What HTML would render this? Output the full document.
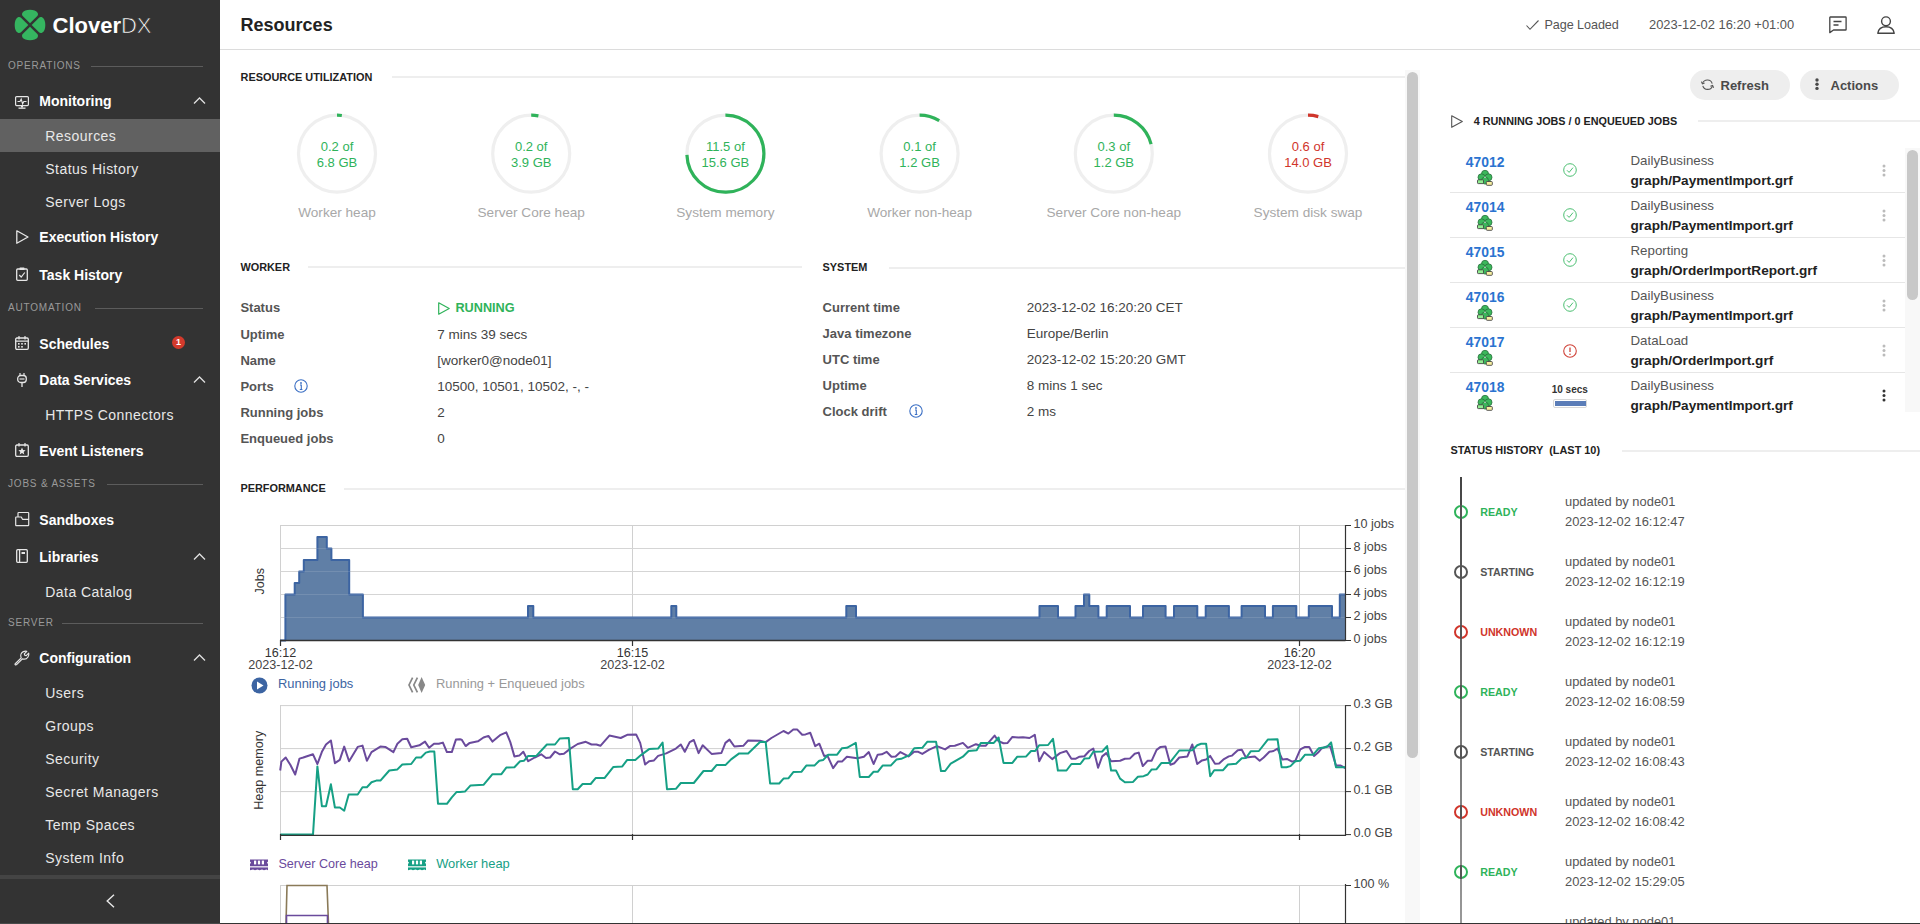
<!DOCTYPE html><html><head><meta charset="utf-8"><style>
html,body{margin:0;padding:0;width:1920px;height:924px;overflow:hidden;background:#fff;font-family:"Liberation Sans",sans-serif;}
body{position:relative}
div{box-sizing:border-box}
</style></head><body>
<div style="position:absolute;left:0px;top:0px;width:220px;height:924px;background:#333333;"></div>
<svg style="position:absolute;left:15px;top:10px;overflow:visible" width="30" height="30" viewBox="0 0 30 30"><path d="M15,13.3 L7.7,6 C5.8,4 7.5,-0.3 15,-0.3 C22.5,-0.3 24.2,4 22.3,6 Z" fill="#35b560" transform="rotate(0 15 15)"/><path d="M15,13.3 L7.7,6 C5.8,4 7.5,-0.3 15,-0.3 C22.5,-0.3 24.2,4 22.3,6 Z" fill="#35b560" transform="rotate(90 15 15)"/><path d="M15,13.3 L7.7,6 C5.8,4 7.5,-0.3 15,-0.3 C22.5,-0.3 24.2,4 22.3,6 Z" fill="#35b560" transform="rotate(180 15 15)"/><path d="M15,13.3 L7.7,6 C5.8,4 7.5,-0.3 15,-0.3 C22.5,-0.3 24.2,4 22.3,6 Z" fill="#35b560" transform="rotate(270 15 15)"/></svg>
<div style="position:absolute;left:52.50px;top:14.68px;font-size:22px;line-height:22px;color:#fff;font-weight:700;letter-spacing:0px;white-space:nowrap;"><b>Clover</b><span style="font-weight:400;-webkit-text-stroke:0.7px #333">DX</span></div>
<div style="position:absolute;left:8.00px;top:60.53px;font-size:10px;line-height:10px;color:#9a9a9a;font-weight:400;letter-spacing:0.8px;white-space:nowrap;">OPERATIONS</div>
<div style="position:absolute;left:91px;top:66px;width:112px;height:1px;background:#5c5c5c;"></div>
<div style="position:absolute;left:39.30px;top:94.15px;font-size:14px;line-height:14px;color:#ffffff;font-weight:700;letter-spacing:0px;white-space:nowrap;">Monitoring</div>
<svg style="position:absolute;left:193px;top:97px;overflow:visible" width="13" height="7" viewBox="0 0 13 7"><path d="M1,6.5 L6.5,1 L12,6.5" fill="none" stroke="#e0e0e0" stroke-width="1.3"/></svg>
<svg style="position:absolute;left:15px;top:95.5px;overflow:visible" width="14" height="13" viewBox="0 0 14 13"><rect x="0.6" y="0.6" width="12.8" height="9" rx="1" fill="none" stroke="#e6e6e6" stroke-width="1.2"/><path d="M2.5,5.5 L5,5.5 L6.2,3 L7.6,8 L8.8,5.5 L11.5,5.5" fill="none" stroke="#e6e6e6" stroke-width="1.1"/><rect x="6" y="10" width="2" height="1.5" fill="#e6e6e6"/><rect x="3.5" y="11.5" width="7" height="1.3" fill="#e6e6e6"/></svg>
<div style="position:absolute;left:0px;top:119px;width:220px;height:33px;background:#616161;"></div>
<div style="position:absolute;left:45.30px;top:128.85px;font-size:14px;line-height:14px;color:#e8e8e8;font-weight:400;letter-spacing:0.45px;white-space:nowrap;">Resources</div>
<div style="position:absolute;left:45.30px;top:162.15px;font-size:14px;line-height:14px;color:#e8e8e8;font-weight:400;letter-spacing:0.45px;white-space:nowrap;">Status History</div>
<div style="position:absolute;left:45.30px;top:195.45px;font-size:14px;line-height:14px;color:#e8e8e8;font-weight:400;letter-spacing:0.45px;white-space:nowrap;">Server Logs</div>
<div style="position:absolute;left:39.30px;top:230.15px;font-size:14px;line-height:14px;color:#ffffff;font-weight:700;letter-spacing:0px;white-space:nowrap;">Execution History</div>
<svg style="position:absolute;left:16px;top:230px;overflow:visible" width="13" height="14" viewBox="0 0 13 14"><path d="M0.8,0.8 L12,7 L0.8,13.2 Z" fill="none" stroke="#e6e6e6" stroke-width="1.3" stroke-linejoin="round"/></svg>
<div style="position:absolute;left:39.30px;top:267.65px;font-size:14px;line-height:14px;color:#ffffff;font-weight:700;letter-spacing:0px;white-space:nowrap;">Task History</div>
<svg style="position:absolute;left:16px;top:267.0px;overflow:visible" width="12" height="14" viewBox="0 0 12 14"><rect x="0.7" y="2" width="10.6" height="11.3" rx="1" fill="none" stroke="#e6e6e6" stroke-width="1.3"/><rect x="3.5" y="0.5" width="5" height="2.5" rx="0.6" fill="#e6e6e6"/><path d="M3.2,8 L5.2,10 L8.8,5.5" fill="none" stroke="#e6e6e6" stroke-width="1.2"/></svg>
<div style="position:absolute;left:8.00px;top:302.54px;font-size:10px;line-height:10px;color:#9a9a9a;font-weight:400;letter-spacing:0.8px;white-space:nowrap;">AUTOMATION</div>
<div style="position:absolute;left:95px;top:308px;width:108px;height:1px;background:#5c5c5c;"></div>
<div style="position:absolute;left:39.30px;top:336.65px;font-size:14px;line-height:14px;color:#ffffff;font-weight:700;letter-spacing:0px;white-space:nowrap;">Schedules</div>
<div style="position:absolute;left:172px;top:336.0px;width:13px;height:13px;border-radius:50%;background:#d33a2c;color:#fff;font-size:9px;line-height:13px;text-align:center;font-weight:700">1</div>
<svg style="position:absolute;left:15px;top:336.0px;overflow:visible" width="14" height="14" viewBox="0 0 14 14"><rect x="0.7" y="2" width="12.6" height="11.3" rx="1.2" fill="none" stroke="#e6e6e6" stroke-width="1.3"/><path d="M4,0 V3.5 M10,0 V3.5 M0.7,5.2 H13.3" stroke="#e6e6e6" stroke-width="1.2"/><g fill="#e6e6e6"><rect x="3" y="7" width="1.6" height="1.6"/><rect x="6.2" y="7" width="1.6" height="1.6"/><rect x="9.4" y="7" width="1.6" height="1.6"/><rect x="3" y="10" width="1.6" height="1.6"/><rect x="6.2" y="10" width="1.6" height="1.6"/></g></svg>
<div style="position:absolute;left:39.30px;top:373.35px;font-size:14px;line-height:14px;color:#ffffff;font-weight:700;letter-spacing:0px;white-space:nowrap;">Data Services</div>
<svg style="position:absolute;left:193px;top:376.2px;overflow:visible" width="13" height="7" viewBox="0 0 13 7"><path d="M1,6.5 L6.5,1 L12,6.5" fill="none" stroke="#e0e0e0" stroke-width="1.3"/></svg>
<svg style="position:absolute;left:17px;top:372.7px;overflow:visible" width="10" height="14" viewBox="0 0 10 14"><path d="M3,0 V2.5 M7,0 V2.5" stroke="#e6e6e6" stroke-width="1.2"/><rect x="0.7" y="2.5" width="8.6" height="7" rx="3" fill="none" stroke="#e6e6e6" stroke-width="1.3"/><path d="M2.5,6 H7.5" stroke="#e6e6e6" stroke-width="1.2"/><path d="M5,9.5 V14" stroke="#e6e6e6" stroke-width="1.3"/></svg>
<div style="position:absolute;left:45.30px;top:408.35px;font-size:14px;line-height:14px;color:#e8e8e8;font-weight:400;letter-spacing:0.45px;white-space:nowrap;">HTTPS Connectors</div>
<div style="position:absolute;left:39.30px;top:443.95px;font-size:14px;line-height:14px;color:#ffffff;font-weight:700;letter-spacing:0px;white-space:nowrap;">Event Listeners</div>
<svg style="position:absolute;left:15px;top:442.8px;overflow:visible" width="14" height="14" viewBox="0 0 14 14"><rect x="0.7" y="2" width="12.6" height="11.3" rx="1.2" fill="none" stroke="#e6e6e6" stroke-width="1.3"/><path d="M4,0 V3.5 M10,0 V3.5" stroke="#e6e6e6" stroke-width="1.2"/><path d="M7,4.5 L8.1,7 L10.6,7.2 L8.7,8.9 L9.3,11.4 L7,10.1 L4.7,11.4 L5.3,8.9 L3.4,7.2 L5.9,7 Z" fill="#e6e6e6"/></svg>
<div style="position:absolute;left:8.00px;top:478.54px;font-size:10px;line-height:10px;color:#9a9a9a;font-weight:400;letter-spacing:0.8px;white-space:nowrap;">JOBS &amp; ASSETS</div>
<div style="position:absolute;left:107px;top:484px;width:96px;height:1px;background:#5c5c5c;"></div>
<div style="position:absolute;left:39.30px;top:512.55px;font-size:14px;line-height:14px;color:#ffffff;font-weight:700;letter-spacing:0px;white-space:nowrap;">Sandboxes</div>
<svg style="position:absolute;left:15px;top:511.59999999999997px;overflow:visible" width="14" height="14" viewBox="0 0 14 14"><path d="M3,5 V1.2 Q3,0.5 3.7,0.5 H13 Q13.7,0.5 13.7,1.2 V7.3" fill="none" stroke="#e6e6e6" stroke-width="1.2"/><path d="M0.7,13 V5.6 Q0.7,5 1.3,5 H6.3 L7.5,7.3 H13.7 V13 Q13.7,13.7 13,13.7 H1.4 Q0.7,13.7 0.7,13 Z" fill="none" stroke="#e6e6e6" stroke-width="1.2" stroke-linejoin="round"/></svg>
<div style="position:absolute;left:39.30px;top:549.65px;font-size:14px;line-height:14px;color:#ffffff;font-weight:700;letter-spacing:0px;white-space:nowrap;">Libraries</div>
<svg style="position:absolute;left:193px;top:552.5px;overflow:visible" width="13" height="7" viewBox="0 0 13 7"><path d="M1,6.5 L6.5,1 L12,6.5" fill="none" stroke="#e0e0e0" stroke-width="1.3"/></svg>
<svg style="position:absolute;left:16px;top:549.0px;overflow:visible" width="12" height="14" viewBox="0 0 12 14"><rect x="0.7" y="0.7" width="10.6" height="12.6" rx="1" fill="none" stroke="#e6e6e6" stroke-width="1.3"/><path d="M3.6,0.7 V13.3" stroke="#e6e6e6" stroke-width="1.3"/><rect x="5.5" y="3" width="3.5" height="2" fill="#e6e6e6"/></svg>
<div style="position:absolute;left:45.30px;top:584.95px;font-size:14px;line-height:14px;color:#e8e8e8;font-weight:400;letter-spacing:0.45px;white-space:nowrap;">Data Catalog</div>
<div style="position:absolute;left:8.00px;top:617.83px;font-size:10px;line-height:10px;color:#9a9a9a;font-weight:400;letter-spacing:0.8px;white-space:nowrap;">SERVER</div>
<div style="position:absolute;left:62px;top:623px;width:141px;height:1px;background:#5c5c5c;"></div>
<div style="position:absolute;left:39.30px;top:651.35px;font-size:14px;line-height:14px;color:#ffffff;font-weight:700;letter-spacing:0px;white-space:nowrap;">Configuration</div>
<svg style="position:absolute;left:193px;top:654.2px;overflow:visible" width="13" height="7" viewBox="0 0 13 7"><path d="M1,6.5 L6.5,1 L12,6.5" fill="none" stroke="#e0e0e0" stroke-width="1.3"/></svg>
<svg style="position:absolute;left:14px;top:650.2px;overflow:visible" width="15" height="15" viewBox="0 0 15 15"><path d="M1.5,13.5 L7.2,7.8 C6.2,5.5 7,2.8 9.3,1.6 C10.5,1 11.8,1 12.8,1.3 L10.3,3.8 L10.8,5.2 L12.2,5.7 L14.7,3.2 C15,4.4 14.8,5.8 14,7 C12.8,8.8 10.5,9.6 8.4,8.9 L2.6,14.6 C2.2,15 1.5,15 1.2,14.6 C0.8,14.2 0.9,13.9 1.5,13.5 Z" fill="none" stroke="#e6e6e6" stroke-width="1.2" stroke-linejoin="round"/></svg>
<div style="position:absolute;left:45.30px;top:686.35px;font-size:14px;line-height:14px;color:#e8e8e8;font-weight:400;letter-spacing:0.45px;white-space:nowrap;">Users</div>
<div style="position:absolute;left:45.30px;top:719.05px;font-size:14px;line-height:14px;color:#e8e8e8;font-weight:400;letter-spacing:0.45px;white-space:nowrap;">Groups</div>
<div style="position:absolute;left:45.30px;top:752.35px;font-size:14px;line-height:14px;color:#e8e8e8;font-weight:400;letter-spacing:0.45px;white-space:nowrap;">Security</div>
<div style="position:absolute;left:45.30px;top:785.35px;font-size:14px;line-height:14px;color:#e8e8e8;font-weight:400;letter-spacing:0.45px;white-space:nowrap;">Secret Managers</div>
<div style="position:absolute;left:45.30px;top:817.95px;font-size:14px;line-height:14px;color:#e8e8e8;font-weight:400;letter-spacing:0.45px;white-space:nowrap;">Temp Spaces</div>
<div style="position:absolute;left:45.30px;top:851.35px;font-size:14px;line-height:14px;color:#e8e8e8;font-weight:400;letter-spacing:0.45px;white-space:nowrap;">System Info</div>
<div style="position:absolute;left:0px;top:875px;width:220px;height:4px;background:#444444;"></div>
<svg style="position:absolute;left:106px;top:894px;overflow:visible" width="9" height="14" viewBox="0 0 9 14"><path d="M8,0.7 L1.2,7 L8,13.3" fill="none" stroke="#e8e8e8" stroke-width="1.4"/></svg>
<div style="position:absolute;left:240.60px;top:16.16px;font-size:18px;line-height:18px;color:#222;font-weight:700;letter-spacing:0px;white-space:nowrap;">Resources</div>
<div style="position:absolute;left:220px;top:49px;width:1700px;height:1px;background:#dcdcdc;"></div>
<svg style="position:absolute;left:1526px;top:20px;overflow:visible" width="13" height="10" viewBox="0 0 13 10"><path d="M0.5,5.5 L4,9.3 L12.5,0.5" fill="none" stroke="#555" stroke-width="1.1"/></svg>
<div style="position:absolute;left:1544.40px;top:18.53px;font-size:12.6px;line-height:12.6px;color:#555;font-weight:400;letter-spacing:-0.05px;white-space:nowrap;">Page Loaded</div>
<div style="position:absolute;left:1649.00px;top:19.28px;font-size:12.9px;line-height:12.9px;color:#555;font-weight:400;letter-spacing:0px;white-space:nowrap;">2023-12-02 16:20 +01:00</div>
<svg style="position:absolute;left:1829px;top:16px;overflow:visible" width="18" height="17" viewBox="0 0 18 17"><path d="M1.3,1 H16.5 C16.9,1 17.1,1.2 17.1,1.6 V13.4 C17.1,13.8 16.9,14 16.5,14 H4.5 L0.8,16.6 V1.6 C0.8,1.2 1,1 1.3,1 Z" fill="none" stroke="#444" stroke-width="1.3" stroke-linejoin="round"/><path d="M4.5,5.5 H12.5 M4.5,9 H9.5" stroke="#444" stroke-width="1.3"/></svg>
<svg style="position:absolute;left:1877px;top:16px;overflow:visible" width="18" height="18" viewBox="0 0 18 18"><circle cx="9" cy="5.3" r="4.4" fill="none" stroke="#444" stroke-width="1.4"/><path d="M0.8,17.3 C1.5,12.5 4.8,10.8 9,10.8 C13.2,10.8 16.5,12.5 17.2,17.3 Z" fill="none" stroke="#444" stroke-width="1.4" stroke-linejoin="round"/></svg>
<div style="position:absolute;left:240.60px;top:71.77px;font-size:10.9px;line-height:10.9px;color:#222;font-weight:700;letter-spacing:0px;white-space:nowrap;">RESOURCE UTILIZATION</div>
<div style="position:absolute;left:392px;top:76px;width:1013px;height:2px;background:#eeeeee;"></div>
<div style="position:absolute;left:1405px;top:70px;width:15px;height:854px;background:#f8f8f8;"></div>
<div style="position:absolute;left:1407px;top:72px;width:11px;height:686px;background:#c8c8c8;border-radius:6px;"></div>
<svg style="position:absolute;left:0;top:0;overflow:visible" width="1" height="1"><circle cx="337" cy="153.7" r="38.5" fill="none" stroke="#efefef" stroke-width="3.2"/><path d="M337,115.19999999999999 A38.5,38.5 0 0 1 341.83,115.50" fill="none" stroke="#2fb35a" stroke-width="3.2"/></svg>
<div style="position:absolute;left:337.00px;top:139.80px;font-size:13px;line-height:13px;color:#2fb35a;font-weight:400;letter-spacing:0px;white-space:nowrap;transform:translateX(-50%);">0.2 of</div>
<div style="position:absolute;left:337.00px;top:155.80px;font-size:13px;line-height:13px;color:#2fb35a;font-weight:400;letter-spacing:0px;white-space:nowrap;transform:translateX(-50%);">6.8 GB</div>
<div style="position:absolute;left:337.00px;top:206.49px;font-size:13.6px;line-height:13.6px;color:#a8a8a8;font-weight:400;letter-spacing:0px;white-space:nowrap;transform:translateX(-50%);">Worker heap</div>
<svg style="position:absolute;left:0;top:0;overflow:visible" width="1" height="1"><circle cx="531.2" cy="153.7" r="38.5" fill="none" stroke="#efefef" stroke-width="3.2"/><path d="M531.2,115.19999999999999 A38.5,38.5 0 0 1 538.41,115.88" fill="none" stroke="#2fb35a" stroke-width="3.2"/></svg>
<div style="position:absolute;left:531.20px;top:139.80px;font-size:13px;line-height:13px;color:#2fb35a;font-weight:400;letter-spacing:0px;white-space:nowrap;transform:translateX(-50%);">0.2 of</div>
<div style="position:absolute;left:531.20px;top:155.80px;font-size:13px;line-height:13px;color:#2fb35a;font-weight:400;letter-spacing:0px;white-space:nowrap;transform:translateX(-50%);">3.9 GB</div>
<div style="position:absolute;left:531.20px;top:206.49px;font-size:13.6px;line-height:13.6px;color:#a8a8a8;font-weight:400;letter-spacing:0px;white-space:nowrap;transform:translateX(-50%);">Server Core heap</div>
<svg style="position:absolute;left:0;top:0;overflow:visible" width="1" height="1"><circle cx="725.4" cy="153.7" r="38.5" fill="none" stroke="#efefef" stroke-width="3.2"/><path d="M725.4,115.19999999999999 A38.5,38.5 0 1 1 686.92,154.91" fill="none" stroke="#2fb35a" stroke-width="3.2"/></svg>
<div style="position:absolute;left:725.40px;top:139.80px;font-size:13px;line-height:13px;color:#2fb35a;font-weight:400;letter-spacing:0px;white-space:nowrap;transform:translateX(-50%);">11.5 of</div>
<div style="position:absolute;left:725.40px;top:155.80px;font-size:13px;line-height:13px;color:#2fb35a;font-weight:400;letter-spacing:0px;white-space:nowrap;transform:translateX(-50%);">15.6 GB</div>
<div style="position:absolute;left:725.40px;top:206.49px;font-size:13.6px;line-height:13.6px;color:#a8a8a8;font-weight:400;letter-spacing:0px;white-space:nowrap;transform:translateX(-50%);">System memory</div>
<svg style="position:absolute;left:0;top:0;overflow:visible" width="1" height="1"><circle cx="919.6" cy="153.7" r="38.5" fill="none" stroke="#efefef" stroke-width="3.2"/><path d="M919.6,115.19999999999999 A38.5,38.5 0 0 1 939.20,120.56" fill="none" stroke="#2fb35a" stroke-width="3.2"/></svg>
<div style="position:absolute;left:919.60px;top:139.80px;font-size:13px;line-height:13px;color:#2fb35a;font-weight:400;letter-spacing:0px;white-space:nowrap;transform:translateX(-50%);">0.1 of</div>
<div style="position:absolute;left:919.60px;top:155.80px;font-size:13px;line-height:13px;color:#2fb35a;font-weight:400;letter-spacing:0px;white-space:nowrap;transform:translateX(-50%);">1.2 GB</div>
<div style="position:absolute;left:919.60px;top:206.49px;font-size:13.6px;line-height:13.6px;color:#a8a8a8;font-weight:400;letter-spacing:0px;white-space:nowrap;transform:translateX(-50%);">Worker non-heap</div>
<svg style="position:absolute;left:0;top:0;overflow:visible" width="1" height="1"><circle cx="1113.8" cy="153.7" r="38.5" fill="none" stroke="#efefef" stroke-width="3.2"/><path d="M1113.8,115.19999999999999 A38.5,38.5 0 0 1 1151.09,144.13" fill="none" stroke="#2fb35a" stroke-width="3.2"/></svg>
<div style="position:absolute;left:1113.80px;top:139.80px;font-size:13px;line-height:13px;color:#2fb35a;font-weight:400;letter-spacing:0px;white-space:nowrap;transform:translateX(-50%);">0.3 of</div>
<div style="position:absolute;left:1113.80px;top:155.80px;font-size:13px;line-height:13px;color:#2fb35a;font-weight:400;letter-spacing:0px;white-space:nowrap;transform:translateX(-50%);">1.2 GB</div>
<div style="position:absolute;left:1113.80px;top:206.49px;font-size:13.6px;line-height:13.6px;color:#a8a8a8;font-weight:400;letter-spacing:0px;white-space:nowrap;transform:translateX(-50%);">Server Core non-heap</div>
<svg style="position:absolute;left:0;top:0;overflow:visible" width="1" height="1"><circle cx="1308" cy="153.7" r="38.5" fill="none" stroke="#efefef" stroke-width="3.2"/><path d="M1308,115.19999999999999 A38.5,38.5 0 0 1 1318.28,116.60" fill="none" stroke="#d0352b" stroke-width="3.2"/></svg>
<div style="position:absolute;left:1308.00px;top:139.80px;font-size:13px;line-height:13px;color:#d0352b;font-weight:400;letter-spacing:0px;white-space:nowrap;transform:translateX(-50%);">0.6 of</div>
<div style="position:absolute;left:1308.00px;top:155.80px;font-size:13px;line-height:13px;color:#d0352b;font-weight:400;letter-spacing:0px;white-space:nowrap;transform:translateX(-50%);">14.0 GB</div>
<div style="position:absolute;left:1308.00px;top:206.49px;font-size:13.6px;line-height:13.6px;color:#a8a8a8;font-weight:400;letter-spacing:0px;white-space:nowrap;transform:translateX(-50%);">System disk swap</div>
<div style="position:absolute;left:240.40px;top:261.57px;font-size:10.9px;line-height:10.9px;color:#222;font-weight:700;letter-spacing:0px;white-space:nowrap;">WORKER</div>
<div style="position:absolute;left:308px;top:266px;width:494px;height:2px;background:#eeeeee;"></div>
<div style="position:absolute;left:822.60px;top:262.07px;font-size:10.9px;line-height:10.9px;color:#222;font-weight:700;letter-spacing:0px;white-space:nowrap;">SYSTEM</div>
<div style="position:absolute;left:889px;top:267px;width:516px;height:2px;background:#eeeeee;"></div>
<div style="position:absolute;left:240.40px;top:301.00px;font-size:13px;line-height:13px;color:#555;font-weight:700;letter-spacing:0px;white-space:nowrap;">Status</div>
<div style="position:absolute;left:240.40px;top:328.00px;font-size:13px;line-height:13px;color:#555;font-weight:700;letter-spacing:0px;white-space:nowrap;">Uptime</div>
<div style="position:absolute;left:240.40px;top:354.00px;font-size:13px;line-height:13px;color:#555;font-weight:700;letter-spacing:0px;white-space:nowrap;">Name</div>
<div style="position:absolute;left:240.40px;top:380.00px;font-size:13px;line-height:13px;color:#555;font-weight:700;letter-spacing:0px;white-space:nowrap;">Ports</div>
<div style="position:absolute;left:240.40px;top:406.00px;font-size:13px;line-height:13px;color:#555;font-weight:700;letter-spacing:0px;white-space:nowrap;">Running jobs</div>
<div style="position:absolute;left:240.40px;top:432.00px;font-size:13px;line-height:13px;color:#555;font-weight:700;letter-spacing:0px;white-space:nowrap;">Enqueued jobs</div>
<svg style="position:absolute;left:437.5px;top:301.5px;overflow:visible" width="12" height="13" viewBox="0 0 12 13"><path d="M0.7,0.8 L11.2,6.5 L0.7,12.2 Z" fill="none" stroke="#2fb35a" stroke-width="1.2" stroke-linejoin="round"/></svg>
<div style="position:absolute;left:455.40px;top:301.75px;font-size:12.7px;line-height:12.7px;color:#2fb35a;font-weight:700;letter-spacing:0px;white-space:nowrap;">RUNNING</div>
<div style="position:absolute;left:437.30px;top:327.57px;font-size:13.5px;line-height:13.5px;color:#444;font-weight:400;letter-spacing:0px;white-space:nowrap;">7 mins 39 secs</div>
<div style="position:absolute;left:437.30px;top:353.57px;font-size:13.5px;line-height:13.5px;color:#444;font-weight:400;letter-spacing:0px;white-space:nowrap;">[worker0@node01]</div>
<div style="position:absolute;left:437.30px;top:379.57px;font-size:13.5px;line-height:13.5px;color:#444;font-weight:400;letter-spacing:0px;white-space:nowrap;">10500, 10501, 10502, -, -</div>
<div style="position:absolute;left:437.30px;top:405.57px;font-size:13.5px;line-height:13.5px;color:#444;font-weight:400;letter-spacing:0px;white-space:nowrap;">2</div>
<div style="position:absolute;left:437.30px;top:431.57px;font-size:13.5px;line-height:13.5px;color:#444;font-weight:400;letter-spacing:0px;white-space:nowrap;">0</div>
<svg style="position:absolute;left:294px;top:379px;overflow:visible" width="14" height="14" viewBox="0 0 14 14"><circle cx="7" cy="7" r="6.2" fill="none" stroke="#3b6fc4" stroke-width="1.1"/><circle cx="7" cy="4" r="0.9" fill="#3b6fc4"/><path d="M6,6 H7.3 V10.5 M5.8,10.5 H8.4" fill="none" stroke="#3b6fc4" stroke-width="1.1"/></svg>
<div style="position:absolute;left:822.60px;top:300.70px;font-size:13px;line-height:13px;color:#555;font-weight:700;letter-spacing:0px;white-space:nowrap;">Current time</div>
<div style="position:absolute;left:1026.70px;top:301.07px;font-size:13.5px;line-height:13.5px;color:#444;font-weight:400;letter-spacing:0px;white-space:nowrap;">2023-12-02 16:20:20 CET</div>
<div style="position:absolute;left:822.60px;top:326.80px;font-size:13px;line-height:13px;color:#555;font-weight:700;letter-spacing:0px;white-space:nowrap;">Java timezone</div>
<div style="position:absolute;left:1026.70px;top:327.17px;font-size:13.5px;line-height:13.5px;color:#444;font-weight:400;letter-spacing:0px;white-space:nowrap;">Europe/Berlin</div>
<div style="position:absolute;left:822.60px;top:352.80px;font-size:13px;line-height:13px;color:#555;font-weight:700;letter-spacing:0px;white-space:nowrap;">UTC time</div>
<div style="position:absolute;left:1026.70px;top:353.17px;font-size:13.5px;line-height:13.5px;color:#444;font-weight:400;letter-spacing:0px;white-space:nowrap;">2023-12-02 15:20:20 GMT</div>
<div style="position:absolute;left:822.60px;top:378.80px;font-size:13px;line-height:13px;color:#555;font-weight:700;letter-spacing:0px;white-space:nowrap;">Uptime</div>
<div style="position:absolute;left:1026.70px;top:379.17px;font-size:13.5px;line-height:13.5px;color:#444;font-weight:400;letter-spacing:0px;white-space:nowrap;">8 mins 1 sec</div>
<div style="position:absolute;left:822.60px;top:404.80px;font-size:13px;line-height:13px;color:#555;font-weight:700;letter-spacing:0px;white-space:nowrap;">Clock drift</div>
<div style="position:absolute;left:1026.70px;top:405.17px;font-size:13.5px;line-height:13.5px;color:#444;font-weight:400;letter-spacing:0px;white-space:nowrap;">2 ms</div>
<svg style="position:absolute;left:909px;top:404px;overflow:visible" width="14" height="14" viewBox="0 0 14 14"><circle cx="7" cy="7" r="6.2" fill="none" stroke="#3b6fc4" stroke-width="1.1"/><circle cx="7" cy="4" r="0.9" fill="#3b6fc4"/><path d="M6,6 H7.3 V10.5 M5.8,10.5 H8.4" fill="none" stroke="#3b6fc4" stroke-width="1.1"/></svg>
<div style="position:absolute;left:240.40px;top:482.77px;font-size:10.9px;line-height:10.9px;color:#222;font-weight:700;letter-spacing:0px;white-space:nowrap;">PERFORMANCE</div>
<div style="position:absolute;left:344px;top:488px;width:1061px;height:2px;background:#eeeeee;"></div>
<svg style="position:absolute;left:0;top:0;overflow:visible" width="1" height="1"><path d="M280.5,525.5 H1345.5" stroke="#d0d0d0" stroke-width="1"/><path d="M280.5,548.5 H1345.5" stroke="#d0d0d0" stroke-width="1"/><path d="M280.5,571.5 H1345.5" stroke="#d0d0d0" stroke-width="1"/><path d="M280.5,594.5 H1345.5" stroke="#d0d0d0" stroke-width="1"/><path d="M280.5,617.5 H1345.5" stroke="#d0d0d0" stroke-width="1"/><path d="M280.5,525 V640" stroke="#d0d0d0" stroke-width="1"/><path d="M632.5,525 V640" stroke="#d0d0d0" stroke-width="1"/><path d="M1299.5,525 V640" stroke="#d0d0d0" stroke-width="1"/><path d="M280,640.5 H285.4 V594.5 H294.7 V583.0 H299.2 V571.5 H303.8 V560.0 H317.4 V537.0 H326.8 V548.5 H331.4 V560.0 H349.2 V594.5 H362.9 V617.5 H528 V606.0 H533.3 V617.5 H671.3 V606.0 H676.3 V617.5 H846.3 V606.0 H856 V617.5 H1039.5 V606.0 H1058 V617.5 H1075.5 V606.0 H1084 V594.5 H1089.3 V606.0 H1098.4 V617.5 H1106.7 V606.0 H1130 V617.5 H1143 V606.0 H1165.6 V617.5 H1174 V606.0 H1197.3 V617.5 H1205.7 V606.0 H1228.9 V617.5 H1241.6 V606.0 H1265 V617.5 H1272.9 V606.0 H1296.3 V617.5 H1308.8 V606.0 H1332 V617.5 H1339.8 V594.5 H1345 V640.5 H280 Z" fill="#607fa6"/><path d="M280,640.5 H285.4 V594.5 H294.7 V583.0 H299.2 V571.5 H303.8 V560.0 H317.4 V537.0 H326.8 V548.5 H331.4 V560.0 H349.2 V594.5 H362.9 V617.5 H528 V606.0 H533.3 V617.5 H671.3 V606.0 H676.3 V617.5 H846.3 V606.0 H856 V617.5 H1039.5 V606.0 H1058 V617.5 H1075.5 V606.0 H1084 V594.5 H1089.3 V606.0 H1098.4 V617.5 H1106.7 V606.0 H1130 V617.5 H1143 V606.0 H1165.6 V617.5 H1174 V606.0 H1197.3 V617.5 H1205.7 V606.0 H1228.9 V617.5 H1241.6 V606.0 H1265 V617.5 H1272.9 V606.0 H1296.3 V617.5 H1308.8 V606.0 H1332 V617.5 H1339.8 V594.5 H1345" fill="none" stroke="#3c64a2" stroke-width="2" stroke-linejoin="round"/><path d="M280.5,548.5 H1345.5" stroke="#ffffff" stroke-opacity="0.12" stroke-width="1"/><path d="M280.5,571.5 H1345.5" stroke="#ffffff" stroke-opacity="0.12" stroke-width="1"/><path d="M280.5,594.5 H1345.5" stroke="#ffffff" stroke-opacity="0.12" stroke-width="1"/><path d="M280.5,617.5 H1345.5" stroke="#ffffff" stroke-opacity="0.12" stroke-width="1"/><path d="M280,640.5 H1345.5" stroke="#333" stroke-width="1.3"/><path d="M1345.5,525 V641" stroke="#333" stroke-width="1.2"/><path d="M1345,525.5 H1351" stroke="#333" stroke-width="1"/><path d="M1345,548.5 H1351" stroke="#333" stroke-width="1"/><path d="M1345,571.5 H1351" stroke="#333" stroke-width="1"/><path d="M1345,594.5 H1351" stroke="#333" stroke-width="1"/><path d="M1345,617.5 H1351" stroke="#333" stroke-width="1"/><path d="M1345,640.5 H1351" stroke="#333" stroke-width="1"/><path d="M280.5,640 V646" stroke="#333" stroke-width="1.2"/><path d="M632.5,640 V646" stroke="#333" stroke-width="1.2"/><path d="M1299.5,640 V646" stroke="#333" stroke-width="1.2"/></svg>
<div style="position:absolute;left:1353.50px;top:518.43px;font-size:12.6px;line-height:12.6px;color:#444;font-weight:400;letter-spacing:0px;white-space:nowrap;">10 jobs</div>
<div style="position:absolute;left:1353.50px;top:541.43px;font-size:12.6px;line-height:12.6px;color:#444;font-weight:400;letter-spacing:0px;white-space:nowrap;">8 jobs</div>
<div style="position:absolute;left:1353.50px;top:564.43px;font-size:12.6px;line-height:12.6px;color:#444;font-weight:400;letter-spacing:0px;white-space:nowrap;">6 jobs</div>
<div style="position:absolute;left:1353.50px;top:587.43px;font-size:12.6px;line-height:12.6px;color:#444;font-weight:400;letter-spacing:0px;white-space:nowrap;">4 jobs</div>
<div style="position:absolute;left:1353.50px;top:610.43px;font-size:12.6px;line-height:12.6px;color:#444;font-weight:400;letter-spacing:0px;white-space:nowrap;">2 jobs</div>
<div style="position:absolute;left:1353.50px;top:633.43px;font-size:12.6px;line-height:12.6px;color:#444;font-weight:400;letter-spacing:0px;white-space:nowrap;">0 jobs</div>
<div style="position:absolute;left:280.50px;top:646.83px;font-size:12.6px;line-height:12.6px;color:#333;font-weight:400;letter-spacing:0px;white-space:nowrap;transform:translateX(-50%);">16:12</div>
<div style="position:absolute;left:280.50px;top:658.83px;font-size:12.6px;line-height:12.6px;color:#444;font-weight:400;letter-spacing:0px;white-space:nowrap;transform:translateX(-50%);">2023-12-02</div>
<div style="position:absolute;left:632.50px;top:646.83px;font-size:12.6px;line-height:12.6px;color:#333;font-weight:400;letter-spacing:0px;white-space:nowrap;transform:translateX(-50%);">16:15</div>
<div style="position:absolute;left:632.50px;top:658.83px;font-size:12.6px;line-height:12.6px;color:#444;font-weight:400;letter-spacing:0px;white-space:nowrap;transform:translateX(-50%);">2023-12-02</div>
<div style="position:absolute;left:1299.50px;top:646.83px;font-size:12.6px;line-height:12.6px;color:#333;font-weight:400;letter-spacing:0px;white-space:nowrap;transform:translateX(-50%);">16:20</div>
<div style="position:absolute;left:1299.50px;top:658.83px;font-size:12.6px;line-height:12.6px;color:#444;font-weight:400;letter-spacing:0px;white-space:nowrap;transform:translateX(-50%);">2023-12-02</div>
<div style="position:absolute;left:250px;top:538px;width:16px;height:90px"></div>
<div style="position:absolute;left:260.00px;top:575.33px;font-size:12.6px;line-height:12.6px;color:#333;font-weight:400;letter-spacing:0px;white-space:nowrap;transform:translate(-50%,0) rotate(-90deg);transform-origin:50% 50%;">Jobs</div>
<svg style="position:absolute;left:251px;top:676.5px;overflow:visible" width="17" height="17" viewBox="0 0 17 17"><circle cx="8.5" cy="8.5" r="8" fill="#3c64a2"/><path d="M6,4.5 L12.5,8.5 L6,12.5 Z" fill="#fff"/></svg>
<div style="position:absolute;left:278.00px;top:677.58px;font-size:12.9px;line-height:12.9px;color:#3c64a2;font-weight:400;letter-spacing:0px;white-space:nowrap;">Running jobs</div>
<svg style="position:absolute;left:408px;top:677px;overflow:visible" width="18" height="16" viewBox="0 0 18 16"><path d="M4.6,0.6 L1,8 L4.6,15.4 M9.4,0.6 L5.8,8 L9.4,15.4" fill="none" stroke="#888" stroke-width="1.7"/><path d="M13.6,0 L10.2,8 L13.6,16 L17.2,8 Z" fill="#888"/></svg>
<div style="position:absolute;left:436.00px;top:677.58px;font-size:12.9px;line-height:12.9px;color:#999;font-weight:400;letter-spacing:0px;white-space:nowrap;">Running + Enqueued jobs</div>
<svg style="position:absolute;left:0;top:0;overflow:visible" width="1" height="1"><path d="M280.5,705.6 H1345.5" stroke="#d0d0d0" stroke-width="1"/><path d="M280.5,748.6 H1345.5" stroke="#d0d0d0" stroke-width="1"/><path d="M280.5,791.6 H1345.5" stroke="#d0d0d0" stroke-width="1"/><path d="M280.5,705 V834" stroke="#d0d0d0" stroke-width="1"/><path d="M632.5,705 V834" stroke="#d0d0d0" stroke-width="1"/><path d="M1299.5,705 V834" stroke="#d0d0d0" stroke-width="1"/><polyline points="280.2,770.5 281.4,761.6 285.7,757.5 290.3,764.8 295.2,774.5 299.5,758.6 303.3,757.5 313.0,754.3 317.4,764.0 321.9,751.8 326.0,744.5 330.9,740.5 334.9,763.2 339.8,759.9 344.2,746.6 349.1,761.2 357.7,746.9 362.5,745.6 366.9,760.7 371.5,752.1 380.4,746.6 385.3,746.9 393.4,752.1 397.4,743.7 402.3,739.2 407.2,738.8 411.2,747.3 419.4,745.3 425.0,741.6 429.1,747.8 434.0,743.7 438.8,743.7 442.9,742.6 446.9,752.1 451.8,752.1 455.9,739.6 460.0,739.2 461.6,739.6 465.6,746.1 465.7,746.1 469.7,742.9 477.9,741.3 483.5,737.5 488.4,735.9 492.5,741.6 500.6,734.8 506.3,732.3 510.3,742.1 514.4,756.4 519.3,755.6 523.3,751.8 528.2,761.2 534.7,757.5 541.2,754.3 546.0,758.0 550.1,757.5 555.0,751.5 559.8,754.3 563.9,753.8 570.4,748.6 577.7,744.0 585.8,741.8 591.5,744.5 596.4,744.5 600.4,745.8 609.4,735.6 620.7,738.0 627.2,734.8 636.1,734.4 640.2,742.9 645.1,764.5 649.1,761.2 654.0,760.4 658.1,755.9 666.2,753.4 675.9,748.6 680.8,744.5 684.8,751.8 689.7,742.1 693.8,740.0 698.6,753.1 702.7,745.3 711.6,753.9 721.4,753.0 725.4,742.9 729.5,739.6 734.4,746.5 743.3,745.8 748.1,740.5 760.0,740.8 765.7,742.1 771.4,738.0 783.5,731.0 788.4,733.6 793.3,729.6 797.3,729.6 802.2,734.8 805.5,734.4 810.3,732.8 815.2,746.1 819.3,743.7 824.1,755.9 827.4,755.6 833.1,768.1 837.9,761.6 842.0,761.6 846.9,756.7 857.4,758.3 863.9,756.7 868.8,752.1 873.6,764.0 877.7,754.7 881.8,754.3 886.6,751.8 891.5,756.7 895.6,756.4 900.4,752.1 908.5,756.4 914.2,751.8 918.3,751.8 922.3,753.9 928.8,749.9 936.9,746.1 945.1,749.4 949.9,746.1 954.8,745.8 962.9,742.9 967.8,747.8 975.9,744.2 980.8,745.8 985.6,745.8 994.6,735.6 998.6,741.3 1003.5,743.2 1007.6,742.9 1012.4,736.9 1018.1,737.5 1023.0,737.2 1029.5,738.0 1034.8,734.8 1039.2,761.2 1044.1,752.1 1052.2,759.1 1060.0,753.1 1066.5,751.0 1071.4,758.8 1075.4,758.8 1079.5,756.7 1084.4,756.2 1089.2,751.0 1093.3,748.6 1098.1,767.7 1102.2,756.4 1106.3,753.1 1111.1,761.2 1120.1,760.7 1124.9,758.8 1129.8,758.6 1134.7,753.8 1138.7,752.6 1142.8,766.1 1147.7,760.7 1151.7,760.7 1156.6,749.9 1160.6,746.9 1165.5,746.5 1170.4,764.8 1174.4,763.2 1179.3,757.5 1187.4,756.4 1192.3,744.5 1197.2,764.0 1202.0,760.4 1206.1,759.6 1210.2,755.9 1215.0,763.7 1219.1,763.5 1224.0,759.1 1228.8,756.4 1232.1,755.6 1237.8,750.2 1241.8,749.7 1245.9,757.5 1254.8,756.4 1259.7,760.7 1263.7,757.5 1269.4,751.8 1273.5,751.0 1277.5,748.6 1282.4,759.6 1287.3,759.1 1292.1,761.6 1295.4,760.7 1300.3,749.4 1305.1,746.9 1309.2,746.9 1314.1,755.9 1318.1,752.6 1321.4,748.6 1326.2,746.6 1330.3,746.6 1336.0,765.6 1340.8,765.6 1345.4,768.1" fill="none" stroke="#6a4a9c" stroke-width="2" stroke-linejoin="round"/><polyline points="280.2,834.6 313.0,834.6 317.4,766.4 321.9,806.2 326.0,806.2 330.9,784.3 334.9,807.5 339.8,807.5 344.2,810.7 348.7,794.5 357.7,794.5 362.5,787.2 366.9,787.2 371.5,782.3 376.3,780.6 380.4,780.6 389.3,770.5 397.4,769.4 402.3,764.5 411.2,764.0 416.1,757.5 421.0,757.5 425.8,752.6 429.9,751.5 434.3,751.5 438.0,803.8 446.9,803.8 451.8,797.3 456.7,791.9 460.0,792.1 464.9,791.6 470.6,785.4 483.5,784.8 492.5,774.2 501.4,774.2 506.3,767.6 514.4,767.2 520.1,761.2 524.1,760.7 528.2,755.9 536.3,755.9 546.9,744.5 555.0,744.5 559.8,738.5 568.8,738.0 572.8,789.2 577.7,789.2 582.6,784.0 590.7,784.0 595.6,778.1 604.5,778.1 613.4,766.9 622.3,766.4 627.2,759.9 635.3,759.9 641.0,755.1 649.1,749.1 658.1,748.6 662.6,742.6 667.0,789.2 675.9,788.8 680.8,783.0 693.8,783.0 703.5,771.0 711.6,771.0 716.5,765.1 725.4,765.1 731.1,759.4 739.2,753.4 748.1,753.4 760.0,742.1 765.7,742.1 770.1,783.5 779.2,783.5 783.5,778.6 788.4,778.3 793.3,772.1 801.4,771.8 806.3,765.6 814.4,765.6 819.3,760.7 823.3,759.9 828.2,754.7 837.1,754.7 842.0,748.2 846.9,747.8 855.8,742.9 859.8,777.0 868.8,777.0 873.6,771.8 877.7,771.8 882.6,765.6 890.7,765.6 896.4,759.6 901.2,758.8 909.4,755.1 914.2,748.2 922.3,747.8 927.2,741.8 936.1,741.8 941.0,771.0 945.1,771.0 950.7,763.7 962.9,756.7 968.6,751.0 976.7,750.2 980.8,742.9 993.8,742.9 998.6,737.5 1003.5,762.9 1012.4,762.9 1017.3,756.7 1026.2,756.4 1031.1,751.0 1035.2,751.0 1039.2,745.3 1048.1,745.0 1053.0,738.8 1057.9,770.5 1060.0,770.5 1066.5,770.5 1071.4,764.0 1080.3,764.0 1084.4,758.6 1089.2,758.3 1093.3,751.8 1102.2,751.5 1107.1,746.1 1111.1,770.5 1116.0,770.5 1120.1,778.6 1124.9,782.2 1133.1,781.9 1137.9,776.7 1143.6,776.2 1147.7,774.5 1151.7,769.4 1156.6,769.2 1161.5,762.9 1169.6,762.9 1179.3,750.5 1192.3,750.2 1197.2,745.3 1201.2,743.7 1206.1,743.7 1210.2,776.2 1214.2,770.2 1223.1,770.2 1228.0,764.5 1236.1,763.7 1241.8,758.3 1245.9,758.0 1250.7,751.3 1258.9,751.0 1267.8,739.6 1277.5,739.2 1281.6,767.2 1286.5,767.2 1290.5,766.1 1295.4,761.2 1300.3,760.7 1305.1,754.7 1313.2,754.7 1318.9,748.2 1327.0,746.9 1331.1,742.4 1336.0,767.2 1345.4,767.2" fill="none" stroke="#16a085" stroke-width="2" stroke-linejoin="round"/><path d="M280,835.3 H1345.5" stroke="#333" stroke-width="1.3"/><path d="M1345.5,705.5 V836" stroke="#333" stroke-width="1.2"/><path d="M1345,705.6 H1351" stroke="#333" stroke-width="1"/><path d="M1345,748.6 H1351" stroke="#333" stroke-width="1"/><path d="M1345,791.6 H1351" stroke="#333" stroke-width="1"/><path d="M1345,834.6 H1351" stroke="#333" stroke-width="1"/><path d="M280.5,834 V840" stroke="#333" stroke-width="1.2"/><path d="M632.5,834 V840" stroke="#333" stroke-width="1.2"/><path d="M1299.5,834 V840" stroke="#333" stroke-width="1.2"/></svg>
<div style="position:absolute;left:1353.50px;top:698.43px;font-size:12.6px;line-height:12.6px;color:#444;font-weight:400;letter-spacing:0px;white-space:nowrap;">0.3 GB</div>
<div style="position:absolute;left:1353.50px;top:741.43px;font-size:12.6px;line-height:12.6px;color:#444;font-weight:400;letter-spacing:0px;white-space:nowrap;">0.2 GB</div>
<div style="position:absolute;left:1353.50px;top:784.43px;font-size:12.6px;line-height:12.6px;color:#444;font-weight:400;letter-spacing:0px;white-space:nowrap;">0.1 GB</div>
<div style="position:absolute;left:1353.50px;top:827.43px;font-size:12.6px;line-height:12.6px;color:#444;font-weight:400;letter-spacing:0px;white-space:nowrap;">0.0 GB</div>
<div style="position:absolute;left:258.50px;top:764.33px;font-size:12.6px;line-height:12.6px;color:#333;font-weight:400;letter-spacing:0px;white-space:nowrap;transform:translate(-50%,0) rotate(-90deg);transform-origin:50% 50%;">Heap memory</div>
<svg style="position:absolute;left:250px;top:859px;overflow:visible" width="18" height="12" viewBox="0 0 18 12"><path d="M0,0.5 H18 V2.8 A0.9,0.9 0 0 0 18,4.6 V7 H0 V4.6 A0.9,0.9 0 0 0 0,2.8 Z" fill="#6a4a9c"/><rect x="4" y="1.6" width="2.2" height="3.8" fill="#fff"/><rect x="7.9" y="1.6" width="2.2" height="3.8" fill="#fff"/><rect x="11.8" y="1.6" width="2.2" height="3.8" fill="#fff"/><rect x="0" y="7" width="18" height="1.6" fill="#6a4a9c" fill-opacity="0.25"/><path d="M0,8.6 H18 V11.2 L16.5,10.6 L14,11.2 L12,10.6 L9.5,11.2 L7.5,10.6 L5,11.2 L3,10.6 L0,11.2 Z" fill="#6a4a9c"/></svg>
<div style="position:absolute;left:278.40px;top:858.33px;font-size:12.6px;line-height:12.6px;color:#6a4a9c;font-weight:400;letter-spacing:0px;white-space:nowrap;">Server Core heap</div>
<svg style="position:absolute;left:408px;top:859px;overflow:visible" width="18" height="12" viewBox="0 0 18 12"><path d="M0,0.5 H18 V2.8 A0.9,0.9 0 0 0 18,4.6 V7 H0 V4.6 A0.9,0.9 0 0 0 0,2.8 Z" fill="#16a085"/><rect x="4" y="1.6" width="2.2" height="3.8" fill="#fff"/><rect x="7.9" y="1.6" width="2.2" height="3.8" fill="#fff"/><rect x="11.8" y="1.6" width="2.2" height="3.8" fill="#fff"/><rect x="0" y="7" width="18" height="1.6" fill="#16a085" fill-opacity="0.25"/><path d="M0,8.6 H18 V11.2 L16.5,10.6 L14,11.2 L12,10.6 L9.5,11.2 L7.5,10.6 L5,11.2 L3,10.6 L0,11.2 Z" fill="#16a085"/></svg>
<div style="position:absolute;left:436.20px;top:858.08px;font-size:12.9px;line-height:12.9px;color:#16a085;font-weight:400;letter-spacing:0px;white-space:nowrap;">Worker heap</div>
<svg style="position:absolute;left:0;top:0;overflow:visible" width="1" height="1"><path d="M280.5,885.5 H1345.5" stroke="#d0d0d0" stroke-width="1"/><path d="M280.5,885 V924" stroke="#d0d0d0" stroke-width="1"/><path d="M632.5,885 V924" stroke="#d0d0d0" stroke-width="1"/><path d="M1299.5,885 V924" stroke="#d0d0d0" stroke-width="1"/><path d="M286,924 L287,885.5 H327 L328.5,924" fill="none" stroke="#8a7a58" stroke-width="1.6"/><path d="M286.5,924 V915.5 H327.5 V924" fill="none" stroke="#6a4a9c" stroke-width="1.6"/><path d="M1345.5,884 V924" stroke="#333" stroke-width="1.2"/><path d="M1345,885.5 H1351" stroke="#333" stroke-width="1"/></svg>
<div style="position:absolute;left:1353.50px;top:878.33px;font-size:12.6px;line-height:12.6px;color:#444;font-weight:400;letter-spacing:0px;white-space:nowrap;">100 %</div>
<div style="position:absolute;left:1690px;top:70px;width:100px;height:30px;border-radius:15px;background:#eeeeee"></div>
<svg style="position:absolute;left:1700.5px;top:78.5px;overflow:visible" width="13" height="12" viewBox="0 0 13 12"><path d="M1.6,4.2 A5.1,5.1 0 0 1 11.2,4.6" fill="none" stroke="#555" stroke-width="1.1"/><path d="M11.4,7.2 A5.1,5.1 0 0 1 1.8,6.8" fill="none" stroke="#555" stroke-width="1.1"/><path d="M0.4,2.6 L1.4,4.9 L3.6,4.1" fill="none" stroke="#555" stroke-width="1.1"/><path d="M12.6,8.8 L11.6,6.5 L9.4,7.3" fill="none" stroke="#555" stroke-width="1.1"/></svg>
<div style="position:absolute;left:1720.50px;top:79.00px;font-size:13px;line-height:13px;color:#4a4a4a;font-weight:700;letter-spacing:0px;white-space:nowrap;">Refresh</div>
<div style="position:absolute;left:1800px;top:70px;width:99px;height:30px;border-radius:15px;background:#eeeeee"></div>
<svg style="position:absolute;left:1814.5px;top:78px;overflow:visible" width="4" height="13" viewBox="0 0 4 13"><circle cx="2" cy="2" r="1.7" fill="#4a4a4a"/><circle cx="2" cy="6.2" r="1.7" fill="#4a4a4a"/><circle cx="2" cy="10.4" r="1.7" fill="#4a4a4a"/></svg>
<div style="position:absolute;left:1830.50px;top:79.00px;font-size:13px;line-height:13px;color:#4a4a4a;font-weight:700;letter-spacing:0px;white-space:nowrap;">Actions</div>
<svg style="position:absolute;left:1450.5px;top:114.5px;overflow:visible" width="12" height="13" viewBox="0 0 12 13"><path d="M0.7,0.7 L11.3,6.5 L0.7,12.3 Z" fill="none" stroke="#555" stroke-width="1.1" stroke-linejoin="round"/></svg>
<div style="position:absolute;left:1473.75px;top:116.36px;font-size:10.8px;line-height:10.8px;color:#222;font-weight:700;letter-spacing:0px;white-space:nowrap;">4 RUNNING JOBS / 0 ENQUEUED JOBS</div>
<div style="position:absolute;left:1698px;top:120px;width:222px;height:2px;background:#eeeeee;"></div>
<div style="position:absolute;left:1905px;top:148px;width:15px;height:264px;background:#f8f8f8;"></div>
<div style="position:absolute;left:1907px;top:150px;width:11px;height:150px;background:#c8c8c8;border-radius:6px;"></div>
<div style="position:absolute;left:1465.80px;top:156.13px;font-size:13.9px;line-height:13.9px;color:#2b73d0;font-weight:700;letter-spacing:0px;white-space:nowrap;">47012</div>
<svg style="position:absolute;left:1477px;top:170px;overflow:visible" width="16" height="16" viewBox="0 0 16 16"><circle cx="8" cy="3.8" r="3.5" fill="#3cb85c" stroke="#2a6e3c" stroke-width="0.8"/><circle cx="11.5" cy="7.3" r="3.5" fill="#3cb85c" stroke="#2a6e3c" stroke-width="0.8"/><circle cx="4.5" cy="7.3" r="3.5" fill="#3cb85c" stroke="#2a6e3c" stroke-width="0.8"/><circle cx="8" cy="10.6" r="3.5" fill="#3cb85c" stroke="#2a6e3c" stroke-width="0.8"/><circle cx="8" cy="7.2" r="0.7" fill="#fff"/><rect x="0.5" y="9.8" width="6" height="3.8" rx="0.8" fill="#90ee90" stroke="#444" stroke-width="0.9"/><rect x="9.3" y="11.5" width="6" height="3.8" rx="0.8" fill="#f8f0a0" stroke="#444" stroke-width="0.9"/></svg>
<svg style="position:absolute;left:1563px;top:163.3px;overflow:visible" width="14" height="14" viewBox="0 0 14 14"><circle cx="7" cy="7" r="6.3" fill="none" stroke="#4cbf72" stroke-width="1"/><path d="M4,7.3 L6.1,9.4 L10,4.6" fill="none" stroke="#4cbf72" stroke-width="1"/></svg>
<div style="position:absolute;left:1630.50px;top:154.24px;font-size:13.3px;line-height:13.3px;color:#555;font-weight:400;letter-spacing:0px;white-space:nowrap;">DailyBusiness</div>
<div style="position:absolute;left:1630.50px;top:174.19px;font-size:13.6px;line-height:13.6px;color:#222;font-weight:700;letter-spacing:0px;white-space:nowrap;">graph/PaymentImport.grf</div>
<svg style="position:absolute;left:1882px;top:163.5px;overflow:visible" width="4" height="13" viewBox="0 0 4 13"><circle cx="2" cy="2" r="1.5" fill="#bbbbbb"/><circle cx="2" cy="6.5" r="1.5" fill="#bbbbbb"/><circle cx="2" cy="11" r="1.5" fill="#bbbbbb"/></svg>
<div style="position:absolute;left:1450px;top:192px;width:455px;height:1px;background:#e6e6e6;"></div>
<div style="position:absolute;left:1465.80px;top:201.13px;font-size:13.9px;line-height:13.9px;color:#2b73d0;font-weight:700;letter-spacing:0px;white-space:nowrap;">47014</div>
<svg style="position:absolute;left:1477px;top:215px;overflow:visible" width="16" height="16" viewBox="0 0 16 16"><circle cx="8" cy="3.8" r="3.5" fill="#3cb85c" stroke="#2a6e3c" stroke-width="0.8"/><circle cx="11.5" cy="7.3" r="3.5" fill="#3cb85c" stroke="#2a6e3c" stroke-width="0.8"/><circle cx="4.5" cy="7.3" r="3.5" fill="#3cb85c" stroke="#2a6e3c" stroke-width="0.8"/><circle cx="8" cy="10.6" r="3.5" fill="#3cb85c" stroke="#2a6e3c" stroke-width="0.8"/><circle cx="8" cy="7.2" r="0.7" fill="#fff"/><rect x="0.5" y="9.8" width="6" height="3.8" rx="0.8" fill="#90ee90" stroke="#444" stroke-width="0.9"/><rect x="9.3" y="11.5" width="6" height="3.8" rx="0.8" fill="#f8f0a0" stroke="#444" stroke-width="0.9"/></svg>
<svg style="position:absolute;left:1563px;top:208.3px;overflow:visible" width="14" height="14" viewBox="0 0 14 14"><circle cx="7" cy="7" r="6.3" fill="none" stroke="#4cbf72" stroke-width="1"/><path d="M4,7.3 L6.1,9.4 L10,4.6" fill="none" stroke="#4cbf72" stroke-width="1"/></svg>
<div style="position:absolute;left:1630.50px;top:199.24px;font-size:13.3px;line-height:13.3px;color:#555;font-weight:400;letter-spacing:0px;white-space:nowrap;">DailyBusiness</div>
<div style="position:absolute;left:1630.50px;top:219.19px;font-size:13.6px;line-height:13.6px;color:#222;font-weight:700;letter-spacing:0px;white-space:nowrap;">graph/PaymentImport.grf</div>
<svg style="position:absolute;left:1882px;top:208.5px;overflow:visible" width="4" height="13" viewBox="0 0 4 13"><circle cx="2" cy="2" r="1.5" fill="#bbbbbb"/><circle cx="2" cy="6.5" r="1.5" fill="#bbbbbb"/><circle cx="2" cy="11" r="1.5" fill="#bbbbbb"/></svg>
<div style="position:absolute;left:1450px;top:237px;width:455px;height:1px;background:#e6e6e6;"></div>
<div style="position:absolute;left:1465.80px;top:246.13px;font-size:13.9px;line-height:13.9px;color:#2b73d0;font-weight:700;letter-spacing:0px;white-space:nowrap;">47015</div>
<svg style="position:absolute;left:1477px;top:260px;overflow:visible" width="16" height="16" viewBox="0 0 16 16"><circle cx="8" cy="3.8" r="3.5" fill="#3cb85c" stroke="#2a6e3c" stroke-width="0.8"/><circle cx="11.5" cy="7.3" r="3.5" fill="#3cb85c" stroke="#2a6e3c" stroke-width="0.8"/><circle cx="4.5" cy="7.3" r="3.5" fill="#3cb85c" stroke="#2a6e3c" stroke-width="0.8"/><circle cx="8" cy="10.6" r="3.5" fill="#3cb85c" stroke="#2a6e3c" stroke-width="0.8"/><circle cx="8" cy="7.2" r="0.7" fill="#fff"/><rect x="0.5" y="9.8" width="6" height="3.8" rx="0.8" fill="#90ee90" stroke="#444" stroke-width="0.9"/><rect x="9.3" y="11.5" width="6" height="3.8" rx="0.8" fill="#f8f0a0" stroke="#444" stroke-width="0.9"/></svg>
<svg style="position:absolute;left:1563px;top:253.3px;overflow:visible" width="14" height="14" viewBox="0 0 14 14"><circle cx="7" cy="7" r="6.3" fill="none" stroke="#4cbf72" stroke-width="1"/><path d="M4,7.3 L6.1,9.4 L10,4.6" fill="none" stroke="#4cbf72" stroke-width="1"/></svg>
<div style="position:absolute;left:1630.50px;top:244.24px;font-size:13.3px;line-height:13.3px;color:#555;font-weight:400;letter-spacing:0px;white-space:nowrap;">Reporting</div>
<div style="position:absolute;left:1630.50px;top:264.19px;font-size:13.6px;line-height:13.6px;color:#222;font-weight:700;letter-spacing:0px;white-space:nowrap;">graph/OrderImportReport.grf</div>
<svg style="position:absolute;left:1882px;top:253.5px;overflow:visible" width="4" height="13" viewBox="0 0 4 13"><circle cx="2" cy="2" r="1.5" fill="#bbbbbb"/><circle cx="2" cy="6.5" r="1.5" fill="#bbbbbb"/><circle cx="2" cy="11" r="1.5" fill="#bbbbbb"/></svg>
<div style="position:absolute;left:1450px;top:282px;width:455px;height:1px;background:#e6e6e6;"></div>
<div style="position:absolute;left:1465.80px;top:291.13px;font-size:13.9px;line-height:13.9px;color:#2b73d0;font-weight:700;letter-spacing:0px;white-space:nowrap;">47016</div>
<svg style="position:absolute;left:1477px;top:305px;overflow:visible" width="16" height="16" viewBox="0 0 16 16"><circle cx="8" cy="3.8" r="3.5" fill="#3cb85c" stroke="#2a6e3c" stroke-width="0.8"/><circle cx="11.5" cy="7.3" r="3.5" fill="#3cb85c" stroke="#2a6e3c" stroke-width="0.8"/><circle cx="4.5" cy="7.3" r="3.5" fill="#3cb85c" stroke="#2a6e3c" stroke-width="0.8"/><circle cx="8" cy="10.6" r="3.5" fill="#3cb85c" stroke="#2a6e3c" stroke-width="0.8"/><circle cx="8" cy="7.2" r="0.7" fill="#fff"/><rect x="0.5" y="9.8" width="6" height="3.8" rx="0.8" fill="#90ee90" stroke="#444" stroke-width="0.9"/><rect x="9.3" y="11.5" width="6" height="3.8" rx="0.8" fill="#f8f0a0" stroke="#444" stroke-width="0.9"/></svg>
<svg style="position:absolute;left:1563px;top:298.3px;overflow:visible" width="14" height="14" viewBox="0 0 14 14"><circle cx="7" cy="7" r="6.3" fill="none" stroke="#4cbf72" stroke-width="1"/><path d="M4,7.3 L6.1,9.4 L10,4.6" fill="none" stroke="#4cbf72" stroke-width="1"/></svg>
<div style="position:absolute;left:1630.50px;top:289.24px;font-size:13.3px;line-height:13.3px;color:#555;font-weight:400;letter-spacing:0px;white-space:nowrap;">DailyBusiness</div>
<div style="position:absolute;left:1630.50px;top:309.19px;font-size:13.6px;line-height:13.6px;color:#222;font-weight:700;letter-spacing:0px;white-space:nowrap;">graph/PaymentImport.grf</div>
<svg style="position:absolute;left:1882px;top:298.5px;overflow:visible" width="4" height="13" viewBox="0 0 4 13"><circle cx="2" cy="2" r="1.5" fill="#bbbbbb"/><circle cx="2" cy="6.5" r="1.5" fill="#bbbbbb"/><circle cx="2" cy="11" r="1.5" fill="#bbbbbb"/></svg>
<div style="position:absolute;left:1450px;top:327px;width:455px;height:1px;background:#e6e6e6;"></div>
<div style="position:absolute;left:1465.80px;top:336.13px;font-size:13.9px;line-height:13.9px;color:#2b73d0;font-weight:700;letter-spacing:0px;white-space:nowrap;">47017</div>
<svg style="position:absolute;left:1477px;top:350px;overflow:visible" width="16" height="16" viewBox="0 0 16 16"><circle cx="8" cy="3.8" r="3.5" fill="#3cb85c" stroke="#2a6e3c" stroke-width="0.8"/><circle cx="11.5" cy="7.3" r="3.5" fill="#3cb85c" stroke="#2a6e3c" stroke-width="0.8"/><circle cx="4.5" cy="7.3" r="3.5" fill="#3cb85c" stroke="#2a6e3c" stroke-width="0.8"/><circle cx="8" cy="10.6" r="3.5" fill="#3cb85c" stroke="#2a6e3c" stroke-width="0.8"/><circle cx="8" cy="7.2" r="0.7" fill="#fff"/><rect x="0.5" y="9.8" width="6" height="3.8" rx="0.8" fill="#90ee90" stroke="#444" stroke-width="0.9"/><rect x="9.3" y="11.5" width="6" height="3.8" rx="0.8" fill="#f8f0a0" stroke="#444" stroke-width="0.9"/></svg>
<svg style="position:absolute;left:1563px;top:343.5px;overflow:visible" width="14" height="14" viewBox="0 0 14 14"><circle cx="7" cy="7" r="6.3" fill="none" stroke="#d0443a" stroke-width="1.1"/><path d="M7,3.5 V8" stroke="#d0443a" stroke-width="1.3"/><circle cx="7" cy="10.2" r="0.8" fill="#d0443a"/></svg>
<div style="position:absolute;left:1630.50px;top:334.24px;font-size:13.3px;line-height:13.3px;color:#555;font-weight:400;letter-spacing:0px;white-space:nowrap;">DataLoad</div>
<div style="position:absolute;left:1630.50px;top:354.19px;font-size:13.6px;line-height:13.6px;color:#222;font-weight:700;letter-spacing:0px;white-space:nowrap;">graph/OrderImport.grf</div>
<svg style="position:absolute;left:1882px;top:343.5px;overflow:visible" width="4" height="13" viewBox="0 0 4 13"><circle cx="2" cy="2" r="1.5" fill="#bbbbbb"/><circle cx="2" cy="6.5" r="1.5" fill="#bbbbbb"/><circle cx="2" cy="11" r="1.5" fill="#bbbbbb"/></svg>
<div style="position:absolute;left:1450px;top:372px;width:455px;height:1px;background:#e6e6e6;"></div>
<div style="position:absolute;left:1465.80px;top:381.13px;font-size:13.9px;line-height:13.9px;color:#2b73d0;font-weight:700;letter-spacing:0px;white-space:nowrap;">47018</div>
<svg style="position:absolute;left:1477px;top:395px;overflow:visible" width="16" height="16" viewBox="0 0 16 16"><circle cx="8" cy="3.8" r="3.5" fill="#3cb85c" stroke="#2a6e3c" stroke-width="0.8"/><circle cx="11.5" cy="7.3" r="3.5" fill="#3cb85c" stroke="#2a6e3c" stroke-width="0.8"/><circle cx="4.5" cy="7.3" r="3.5" fill="#3cb85c" stroke="#2a6e3c" stroke-width="0.8"/><circle cx="8" cy="10.6" r="3.5" fill="#3cb85c" stroke="#2a6e3c" stroke-width="0.8"/><circle cx="8" cy="7.2" r="0.7" fill="#fff"/><rect x="0.5" y="9.8" width="6" height="3.8" rx="0.8" fill="#90ee90" stroke="#444" stroke-width="0.9"/><rect x="9.3" y="11.5" width="6" height="3.8" rx="0.8" fill="#f8f0a0" stroke="#444" stroke-width="0.9"/></svg>
<div style="position:absolute;left:1551.70px;top:384.54px;font-size:10px;line-height:10px;color:#333;font-weight:700;letter-spacing:0px;white-space:nowrap;">10 secs</div>
<div style="position:absolute;left:1553.4px;top:399.4px;width:33.4px;height:8.3px;border:1px solid #d8d8d8;border-radius:2px;background:#fff"></div>
<div style="position:absolute;left:1555px;top:401px;width:30.5px;height:5px;background:#5b7db8;"></div>
<div style="position:absolute;left:1630.50px;top:379.24px;font-size:13.3px;line-height:13.3px;color:#555;font-weight:400;letter-spacing:0px;white-space:nowrap;">DailyBusiness</div>
<div style="position:absolute;left:1630.50px;top:399.19px;font-size:13.6px;line-height:13.6px;color:#222;font-weight:700;letter-spacing:0px;white-space:nowrap;">graph/PaymentImport.grf</div>
<svg style="position:absolute;left:1882px;top:388.5px;overflow:visible" width="4" height="13" viewBox="0 0 4 13"><circle cx="2" cy="2" r="1.5" fill="#333"/><circle cx="2" cy="6.5" r="1.5" fill="#333"/><circle cx="2" cy="11" r="1.5" fill="#333"/></svg>
<div style="position:absolute;left:1450.40px;top:444.77px;font-size:10.9px;line-height:10.9px;color:#222;font-weight:700;letter-spacing:0px;white-space:nowrap;">STATUS HISTORY&nbsp;&nbsp;(LAST 10)</div>
<div style="position:absolute;left:1622px;top:450px;width:298px;height:2px;background:#eeeeee;"></div>
<div style="position:absolute;left:1460px;top:477px;width:2px;height:447px;background:linear-gradient(#444,#999)"></div>
<svg style="position:absolute;left:1454px;top:505px;overflow:visible" width="14" height="14" viewBox="0 0 14 14"><circle cx="7" cy="7" r="6" fill="#fff" stroke="#2fb35a" stroke-width="2"/><path d="M7,0 V14" stroke="#555" stroke-width="2"/></svg>
<div style="position:absolute;left:1480.20px;top:506.94px;font-size:10.7px;line-height:10.7px;color:#2fb35a;font-weight:700;letter-spacing:0px;white-space:nowrap;">READY</div>
<div style="position:absolute;left:1565.00px;top:496.28px;font-size:12.9px;line-height:12.9px;color:#555;font-weight:400;letter-spacing:0px;white-space:nowrap;">updated by node01</div>
<div style="position:absolute;left:1565.00px;top:516.08px;font-size:12.9px;line-height:12.9px;color:#555;font-weight:400;letter-spacing:0px;white-space:nowrap;">2023-12-02 16:12:47</div>
<svg style="position:absolute;left:1454px;top:565px;overflow:visible" width="14" height="14" viewBox="0 0 14 14"><circle cx="7" cy="7" r="6" fill="#fff" stroke="#555" stroke-width="2"/><path d="M7,0 V14" stroke="#555" stroke-width="2"/></svg>
<div style="position:absolute;left:1480.20px;top:566.94px;font-size:10.7px;line-height:10.7px;color:#555;font-weight:700;letter-spacing:0px;white-space:nowrap;">STARTING</div>
<div style="position:absolute;left:1565.00px;top:556.28px;font-size:12.9px;line-height:12.9px;color:#555;font-weight:400;letter-spacing:0px;white-space:nowrap;">updated by node01</div>
<div style="position:absolute;left:1565.00px;top:576.08px;font-size:12.9px;line-height:12.9px;color:#555;font-weight:400;letter-spacing:0px;white-space:nowrap;">2023-12-02 16:12:19</div>
<svg style="position:absolute;left:1454px;top:625px;overflow:visible" width="14" height="14" viewBox="0 0 14 14"><circle cx="7" cy="7" r="6" fill="#fff" stroke="#d0352b" stroke-width="2"/><path d="M7,0 V14" stroke="#555" stroke-width="2"/></svg>
<div style="position:absolute;left:1480.20px;top:626.94px;font-size:10.7px;line-height:10.7px;color:#d0352b;font-weight:700;letter-spacing:0px;white-space:nowrap;">UNKNOWN</div>
<div style="position:absolute;left:1565.00px;top:616.28px;font-size:12.9px;line-height:12.9px;color:#555;font-weight:400;letter-spacing:0px;white-space:nowrap;">updated by node01</div>
<div style="position:absolute;left:1565.00px;top:636.08px;font-size:12.9px;line-height:12.9px;color:#555;font-weight:400;letter-spacing:0px;white-space:nowrap;">2023-12-02 16:12:19</div>
<svg style="position:absolute;left:1454px;top:685px;overflow:visible" width="14" height="14" viewBox="0 0 14 14"><circle cx="7" cy="7" r="6" fill="#fff" stroke="#2fb35a" stroke-width="2"/><path d="M7,0 V14" stroke="#555" stroke-width="2"/></svg>
<div style="position:absolute;left:1480.20px;top:686.94px;font-size:10.7px;line-height:10.7px;color:#2fb35a;font-weight:700;letter-spacing:0px;white-space:nowrap;">READY</div>
<div style="position:absolute;left:1565.00px;top:676.28px;font-size:12.9px;line-height:12.9px;color:#555;font-weight:400;letter-spacing:0px;white-space:nowrap;">updated by node01</div>
<div style="position:absolute;left:1565.00px;top:696.08px;font-size:12.9px;line-height:12.9px;color:#555;font-weight:400;letter-spacing:0px;white-space:nowrap;">2023-12-02 16:08:59</div>
<svg style="position:absolute;left:1454px;top:745px;overflow:visible" width="14" height="14" viewBox="0 0 14 14"><circle cx="7" cy="7" r="6" fill="#fff" stroke="#555" stroke-width="2"/><path d="M7,0 V14" stroke="#555" stroke-width="2"/></svg>
<div style="position:absolute;left:1480.20px;top:746.94px;font-size:10.7px;line-height:10.7px;color:#555;font-weight:700;letter-spacing:0px;white-space:nowrap;">STARTING</div>
<div style="position:absolute;left:1565.00px;top:736.28px;font-size:12.9px;line-height:12.9px;color:#555;font-weight:400;letter-spacing:0px;white-space:nowrap;">updated by node01</div>
<div style="position:absolute;left:1565.00px;top:756.08px;font-size:12.9px;line-height:12.9px;color:#555;font-weight:400;letter-spacing:0px;white-space:nowrap;">2023-12-02 16:08:43</div>
<svg style="position:absolute;left:1454px;top:805px;overflow:visible" width="14" height="14" viewBox="0 0 14 14"><circle cx="7" cy="7" r="6" fill="#fff" stroke="#d0352b" stroke-width="2"/><path d="M7,0 V14" stroke="#555" stroke-width="2"/></svg>
<div style="position:absolute;left:1480.20px;top:806.94px;font-size:10.7px;line-height:10.7px;color:#d0352b;font-weight:700;letter-spacing:0px;white-space:nowrap;">UNKNOWN</div>
<div style="position:absolute;left:1565.00px;top:796.28px;font-size:12.9px;line-height:12.9px;color:#555;font-weight:400;letter-spacing:0px;white-space:nowrap;">updated by node01</div>
<div style="position:absolute;left:1565.00px;top:816.08px;font-size:12.9px;line-height:12.9px;color:#555;font-weight:400;letter-spacing:0px;white-space:nowrap;">2023-12-02 16:08:42</div>
<svg style="position:absolute;left:1454px;top:865px;overflow:visible" width="14" height="14" viewBox="0 0 14 14"><circle cx="7" cy="7" r="6" fill="#fff" stroke="#2fb35a" stroke-width="2"/><path d="M7,0 V14" stroke="#555" stroke-width="2"/></svg>
<div style="position:absolute;left:1480.20px;top:866.94px;font-size:10.7px;line-height:10.7px;color:#2fb35a;font-weight:700;letter-spacing:0px;white-space:nowrap;">READY</div>
<div style="position:absolute;left:1565.00px;top:856.28px;font-size:12.9px;line-height:12.9px;color:#555;font-weight:400;letter-spacing:0px;white-space:nowrap;">updated by node01</div>
<div style="position:absolute;left:1565.00px;top:876.08px;font-size:12.9px;line-height:12.9px;color:#555;font-weight:400;letter-spacing:0px;white-space:nowrap;">2023-12-02 15:29:05</div>
<div style="position:absolute;left:1565.00px;top:916.28px;font-size:12.9px;line-height:12.9px;color:#555;font-weight:400;letter-spacing:0px;white-space:nowrap;">updated by node01</div>
<div style="position:absolute;left:0px;top:923px;width:220px;height:1px;background:#484a4a;"></div>
<div style="position:absolute;left:220px;top:923px;width:1700px;height:1px;background:#333333;"></div>
</body></html>
